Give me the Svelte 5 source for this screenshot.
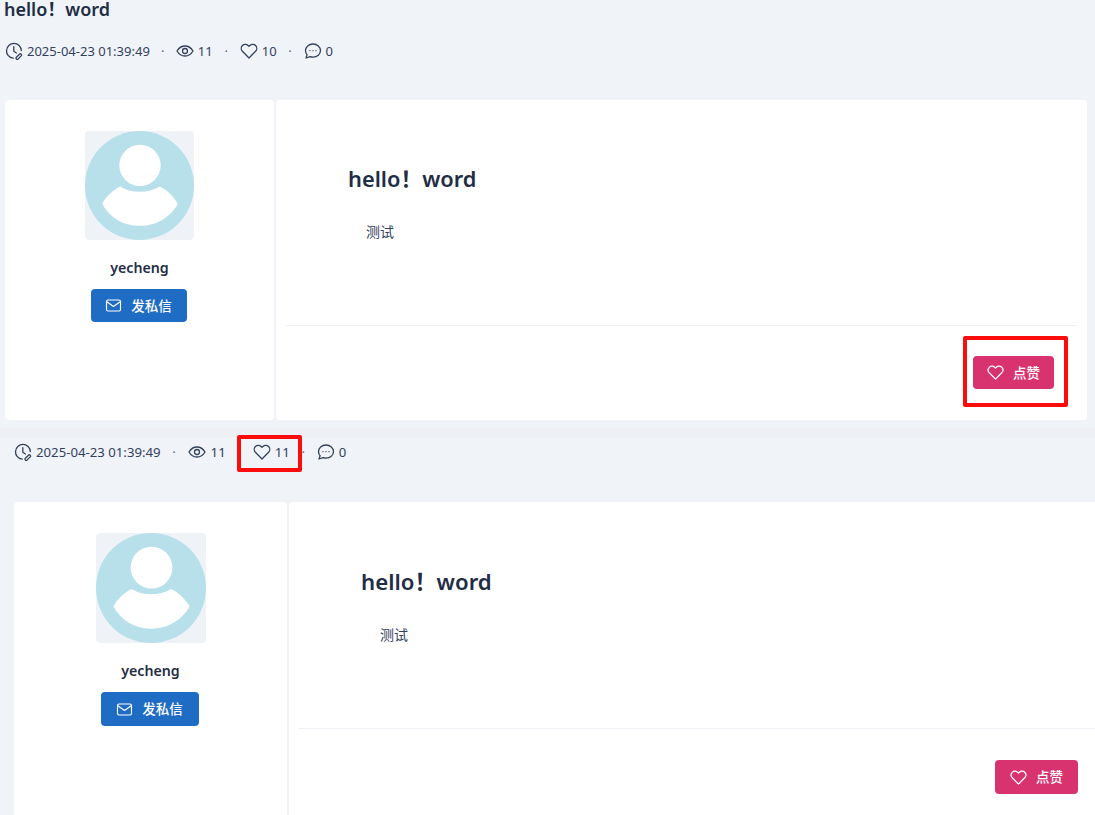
<script>
  const posts = [
    { key: 'first', title: 'hello！word', likes: 10, showTitle: true, marked: 'button' },
    { key: 'second', title: 'hello！word', likes: 11, showTitle: false, marked: 'count' }
  ];
</script>

{#snippet clock()}
  <svg class="icon" viewBox="0 0 18 18" fill="none" stroke="currentColor" stroke-width="1.3" stroke-linecap="round" stroke-linejoin="round">
    <path d="M8.2 16.2A7.4 7.4 0 1 1 16.3 8.6" />
    <path d="M8.8 4.6v4.6l2.6 1.8" />
    <path d="M11.4 15.2l3-3a1.2 1.2 0 0 1 1.8 1.7l-3 3a1.4 1.4 0 0 1-1.9 0 1.2 1.2 0 0 1 .1-1.7z" />
  </svg>
{/snippet}

{#snippet eye()}
  <svg class="icon" viewBox="0 0 18 18" fill="none" stroke="currentColor" stroke-width="1.3">
    <path d="M1 9c2-3.400 4.800-5 8-5s6 1.600 8 5c-2 3.400-4.800 5-8 5s-6-1.600-8-5z" />
    <circle cx="9" cy="9" r="2.500" />
  </svg>
{/snippet}

{#snippet heart(cls)}
  <svg class={cls} viewBox="0 0 18 18" fill="none" stroke="currentColor" stroke-width="1.3" stroke-linejoin="round">
    <path d="M9 16L2.400 9.300a4.200 4.200 0 0 1 0-5.800 4 4 0 0 1 5.700 0L9 4.400l.9-.9a4 4 0 0 1 5.700 0 4.200 4.200 0 0 1 0 5.800z" />
  </svg>
{/snippet}

{#snippet comment()}
  <svg class="icon" viewBox="0 0 18 18" fill="none" stroke="currentColor" stroke-width="1.300" stroke-linejoin="round">
    <path d="M9 2c4.300 0 7.500 2.900 7.500 6.600S13.300 15.200 9 15.200c-1 0-2-.2-2.900-.5L2 16l1.100-3.200C2 11.600 1.500 10.200 1.500 8.600 1.500 4.900 4.700 2 9 2z" />
    <path d="M6 8.700h.01M9 8.700h.01M12 8.700h.01" stroke-linecap="round" />
  </svg>
{/snippet}

{#snippet mail()}
  <svg class="btn-icon" viewBox="0 0 18 18" fill="none" stroke="currentColor" stroke-width="1.200" stroke-linejoin="round">
    <rect x="1.600" y="3.200" width="14.800" height="11.600" rx="1.600" />
    <path d="M2 5l7 5 7-5" />
  </svg>
{/snippet}

{#snippet avatar()}
  <div class="avatar">
    <svg viewBox="0 0 108 108">
      <circle cx="54" cy="54" r="54" fill="#b7e0eb" />
      <circle cx="54.500" cy="34" r="20.500" fill="#fff" />
      <path d="M35 55c10 7 28 7 39 0 7 3.500 13 9 18 17-7 13-21 22-38 22S24 85 17 72c4-7 10-13 18-17z" fill="#fff" />
    </svg>
  </div>
{/snippet}

<main class="page">
  {#each posts as post (post.key)}
    <section class="post {post.key}">
      {#if post.showTitle}
        <h1 class="page-title">{post.title}</h1>
      {/if}

      <div class="meta">
        <span class="item date">{@render clock()}2025-04-23 01:39:49</span>
        <span class="dot">·</span>
        <span class="item views">{@render eye()}11</span>
        <span class="dot">·</span>
        <span class="item likes" class:marked={post.marked === 'count'}>{@render heart('icon')}{post.likes}</span>
        <span class="dot">·</span>
        <span class="item">{@render comment()}0</span>
      </div>

      <div class="cards">
        <aside class="card author">
          {@render avatar()}
          <div class="name">yecheng</div>
          <button class="btn mail">{@render mail()}发私信</button>
        </aside>

        <article class="card content">
          <div class="body">
            <h2>{post.title}</h2>
            <p>测试</p>
          </div>
          <div class="actions">
            <div class="like-wrap" class:marked={post.marked === 'button'}>
              <button class="btn like">{@render heart('btn-icon')}点赞</button>
            </div>
          </div>
        </article>
      </div>
    </section>
  {/each}
</main>

<style>
  :global(body) {
    margin: 0;
    background: #f0f4f9;
    overflow: hidden;
  }

  .page {
    height: 815px;
    overflow: hidden;
    font-family: "Noto Sans", "Noto Sans CJK SC", sans-serif;
    color: #1f2d45;
    background: #eef0f5;
  }

  .post {
    background: #f0f4f9;
    box-sizing: border-box;
  }

  .post.first {
    height: 428px;
    padding: 0 8px 0 5px;
    margin-bottom: 5px;
  }

  .post.second {
    padding: 0 0 0 14px;
    margin-right: -40px;
  }

  .page-title {
    margin: 0 0 0 -1px;
    font-size: 18px;
    line-height: 19px;
    font-weight: 600;
    color: #1f2d45;
  }

  .meta {
    display: flex;
    align-items: center;
    font-size: 13px;
    line-height: 20px;
    color: #33415c;
    height: 20px;
  }

  .first .meta {
    margin-top: 22px;
    margin-bottom: 39px;
  }

  .second .meta {
    margin-top: 9px;
    padding-top: 5px;
    margin-bottom: 40px;
    font-size: 13.2px;
  }

  .item {
    display: inline-flex;
    align-items: center;
    gap: 4px;
    position: relative;
  }

  .second .views {
    gap: 5px;
  }

  .icon {
    width: 18px;
    height: 18px;
    flex: none;
  }

  .dot {
    width: 26px;
    text-align: center;
    color: #5a6679;
  }

  .likes + .dot,
  .views + .dot,
  .second .dot {
    width: 27px;
  }

  .item.marked::after {
    content: "";
    position: absolute;
    left: -16px;
    right: -12px;
    top: -7px;
    bottom: -10px;
    border: 4px solid #fc0d0d;
    border-radius: 2px;
  }

  .cards {
    display: flex;
    gap: 2px;
  }

  .card {
    background: #fff;
    border-radius: 4px;
    box-sizing: border-box;
  }

  .first .cards {
    height: 320px;
  }

  .second .cards {
    height: 340px;
  }

  .author {
    display: flex;
    flex-direction: column;
    align-items: center;
    flex: none;
    padding-top: 31px;
  }

  .first .author {
    width: 269px;
  }

  .second .author {
    width: 273px;
  }

  .avatar {
    border-radius: 4px;
    background: #eff3f8;
    box-sizing: border-box;
    display: flex;
  }

  .avatar svg {
    width: 100%;
    height: 100%;
  }

  .first .avatar {
    width: 109px;
    height: 109px;
  }

  .second .avatar {
    width: 110px;
    height: 110px;
  }

  .name {
    font-size: 14.2px;
    font-weight: 600;
    line-height: 20px;
    margin: 18px 0 11px;
  }

  .btn {
    display: inline-flex;
    align-items: center;
    justify-content: center;
    border: 0;
    border-radius: 4px;
    color: #fff;
    font: 500 13.500px/1 "Noto Sans CJK SC", sans-serif;
    padding: 0;
    gap: 9px;
  }

  .btn-icon {
    width: 17px;
    height: 17px;
  }

  .mail {
    background: #1f6cc4;
    margin-right: 2px;
  }

  .first .mail {
    width: 96px;
    height: 33px;
  }

  .second .mail {
    width: 98px;
    height: 34px;
  }

  .like {
    background: #d9336f;
  }

  .first .like {
    width: 81px;
    height: 33px;
  }

  .second .like {
    width: 83px;
    height: 34px;
  }

  .content {
    flex: 1;
    display: flex;
    flex-direction: column;
    padding: 0 10px;
  }

  .body {
    border-bottom: 1px solid #eceff4;
    padding-left: 62px;
    box-sizing: border-box;
  }

  .first .body {
    height: 226px;
    padding-top: 64px;
  }

  .second .body {
    height: 227px;
    padding-top: 65px;
  }

  .body h2 {
    margin: 0;
    font-size: 21.800px;
    line-height: 30px;
    font-weight: 600;
    color: #1f2d45;
  }

  .second .body h2 {
    font-size: 22.200px;
  }

  .body p {
    margin: 28px 0 0 18px;
    font-size: 14px;
    line-height: 20px;
    color: #33415c;
  }

  .second .body p {
    margin-left: 19px;
  }

  .actions {
    display: flex;
    justify-content: flex-end;
  }

  .first .actions {
    padding: 30px 23px 0 0;
  }

  .second .actions {
    padding: 31px 47px 0 0;
  }

  .like-wrap {
    position: relative;
    display: flex;
  }

  .like-wrap.marked::after {
    content: "";
    position: absolute;
    inset: -20px -14px -18px -10px;
    border: 4px solid #fc0d0d;
    border-radius: 2px;
    pointer-events: none;
  }
</style>
